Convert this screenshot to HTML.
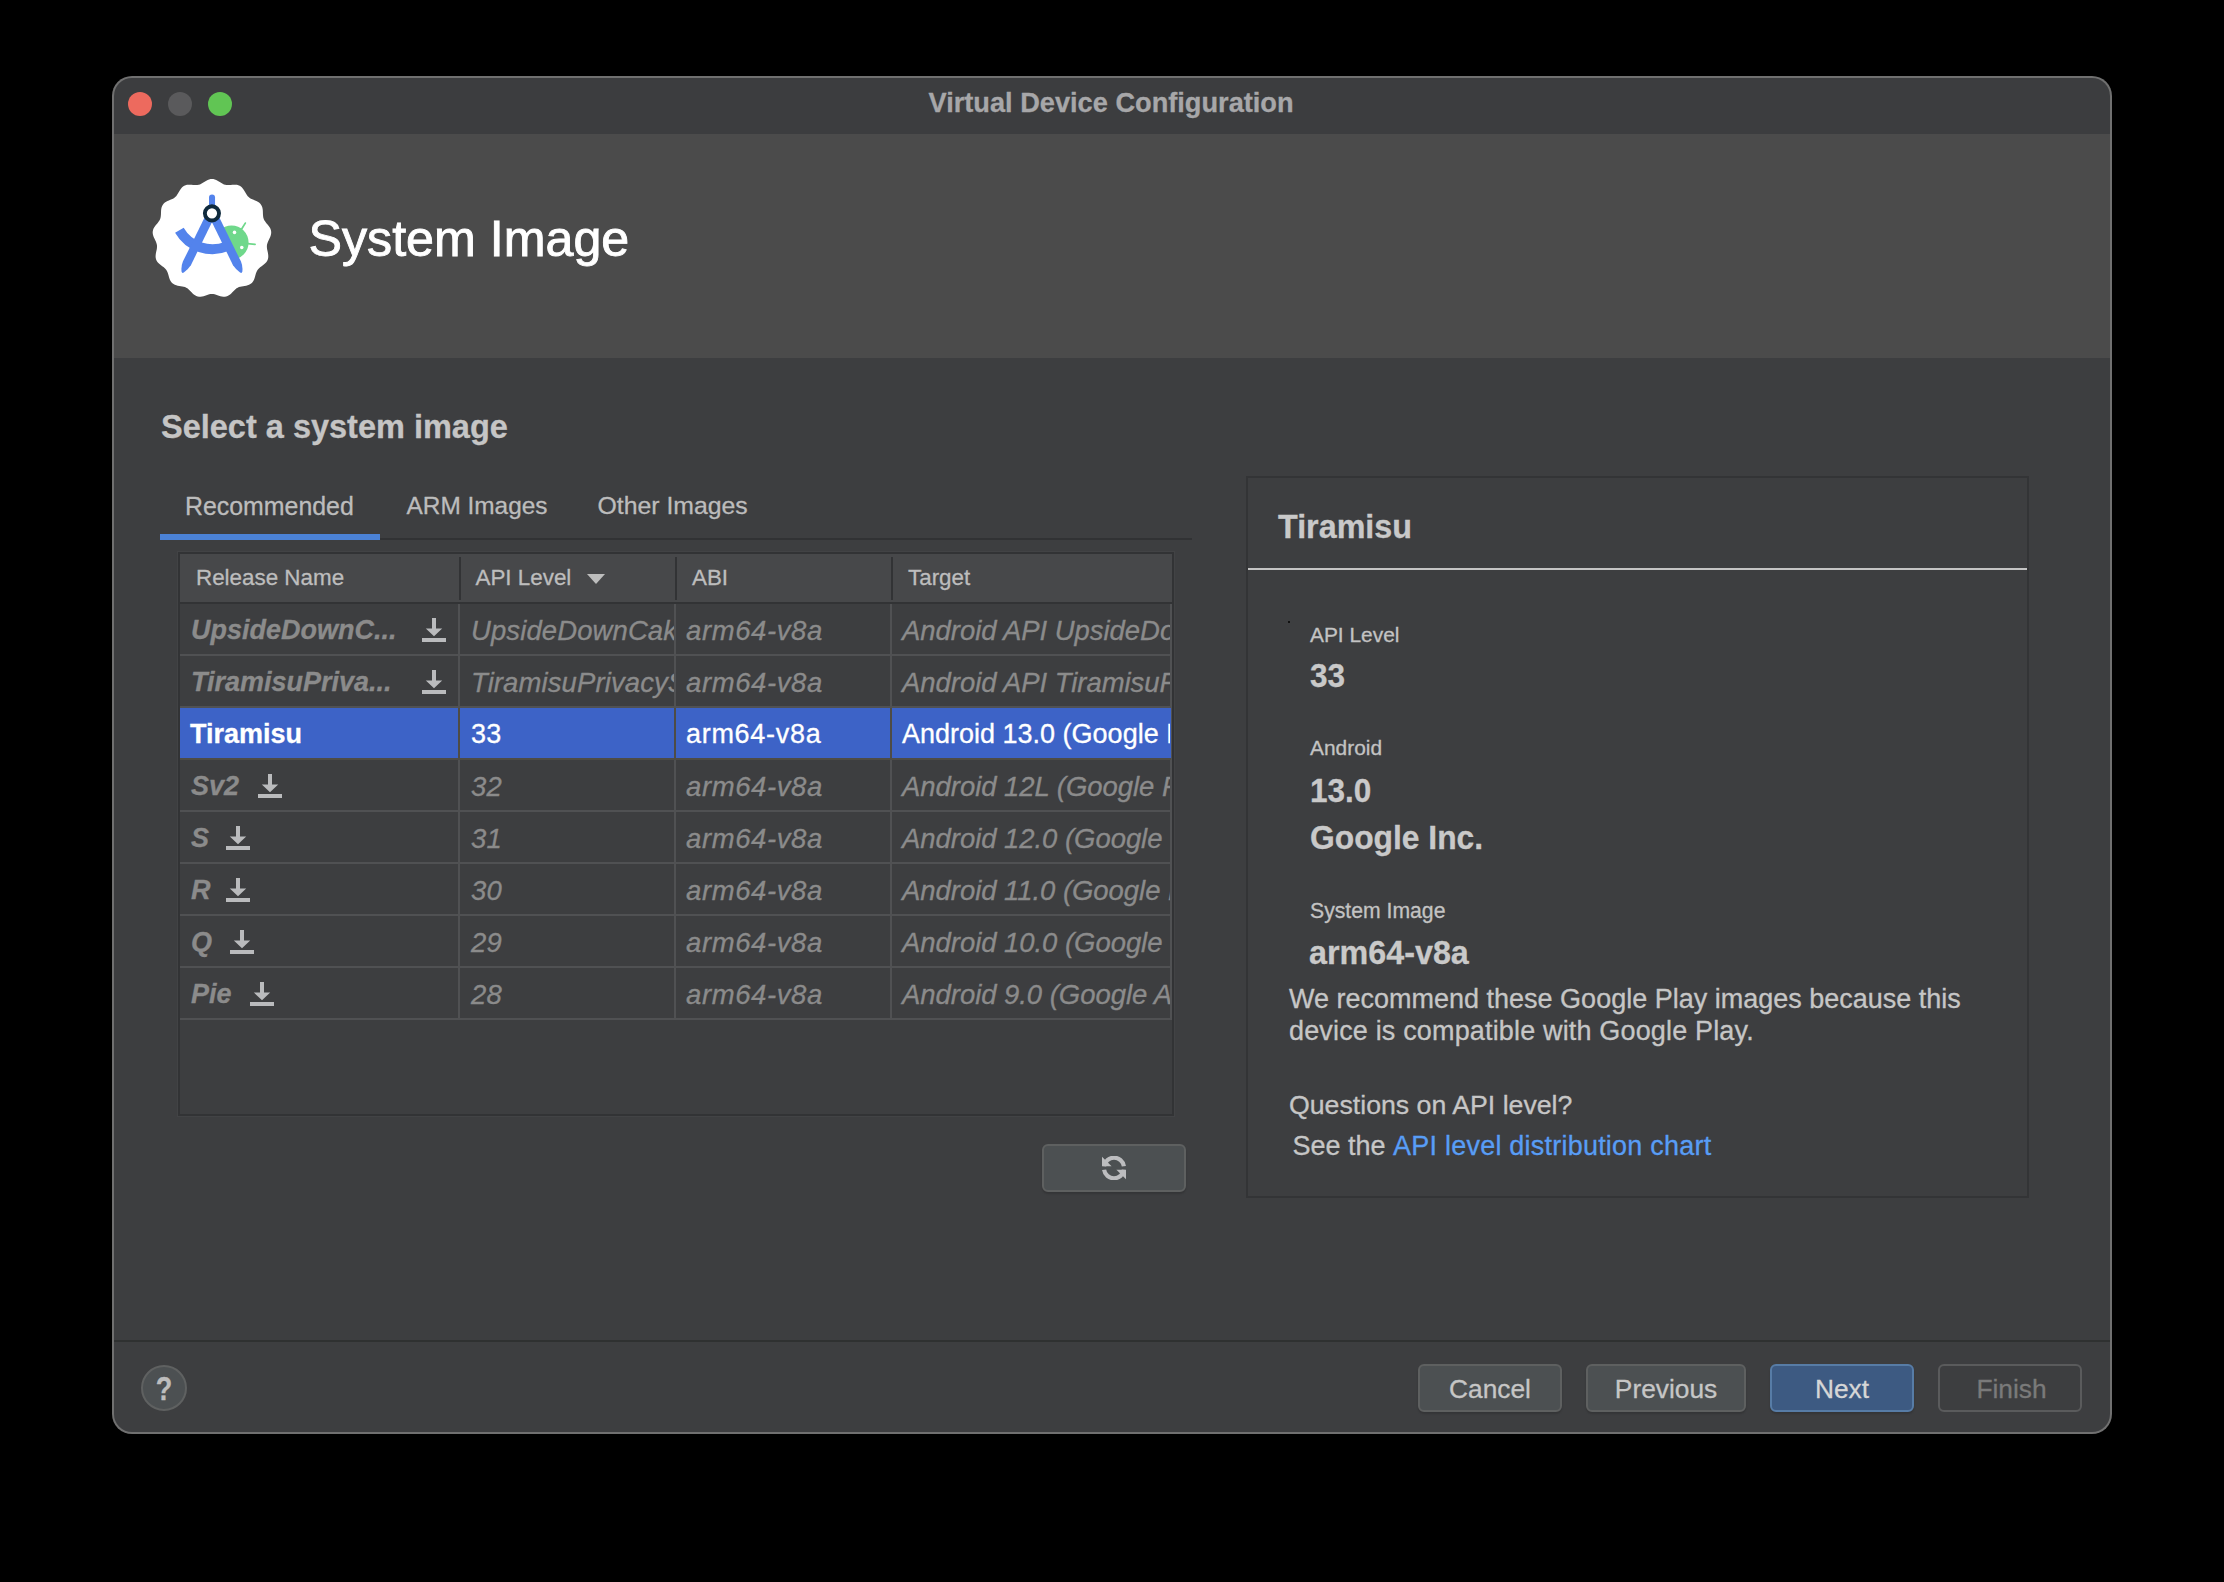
<!DOCTYPE html>
<html><head><meta charset="utf-8"><style>
html,body{margin:0;padding:0;}
body{width:2224px;height:1582px;background:#000;position:relative;overflow:hidden;font-family:"Liberation Sans",sans-serif;}
.t{position:absolute;white-space:pre;-webkit-text-stroke-width:0.3px;}
.r{position:absolute;}
.clip{position:absolute;overflow:hidden;}
.win{position:absolute;left:112px;top:76px;width:2000px;height:1358px;border-radius:20px;background:#707070;}
</style></head><body>
<div class="win"></div>
<div class="r" style="left:114px;top:78px;width:1996px;height:56px;background:#3c3d3f;border-radius:18px 18px 0 0"></div>
<div class="r" style="left:114px;top:134px;width:1996px;height:224px;background:#4b4b4b;"></div>
<div class="r" style="left:114px;top:358px;width:1996px;height:1074px;background:#3d3e40;border-radius:0 0 18px 18px"></div>
<div class="r" style="left:128px;top:92px;width:24px;height:24px;background:#ed6a5e;border-radius:50%"></div>
<div class="r" style="left:168px;top:92px;width:24px;height:24px;background:#5a5a5c;border-radius:50%"></div>
<div class="r" style="left:208px;top:92px;width:24px;height:24px;background:#61c554;border-radius:50%"></div>
<div class="t" style="left:928.5px;top:88.6px;font-size:27.2px;line-height:27.2px;color:#a7a7a9;font-weight:bold;font-style:normal;">Virtual Device Configuration</div>
<svg class="r" style="left:140px;top:170px" width="150" height="140" viewBox="0 0 1695 1582">
<defs><clipPath id="hc"><path d="M870 560 L1185 1200 L1600 1200 L1600 400 Z"/></clipPath></defs>
<path d="M813.0 101.0 L829.3 102.4 L845.3 106.4 L861.1 112.6 L876.4 120.7 L891.3 129.7 L905.8 139.2 L920.1 148.2 L934.2 156.2 L948.3 162.6 L962.8 167.2 L977.8 169.9 L993.3 170.7 L1009.5 170.2 L1026.3 168.8 L1043.5 167.2 L1060.9 166.1 L1078.2 166.2 L1095.1 167.9 L1111.2 171.9 L1126.2 178.2 L1140.0 187.0 L1152.4 198.0 L1163.4 210.9 L1173.3 225.1 L1182.2 240.1 L1190.7 255.1 L1199.1 269.7 L1207.9 283.4 L1217.4 295.6 L1228.1 306.4 L1240.1 315.7 L1253.5 323.8 L1268.0 330.8 L1283.5 337.4 L1299.5 344.0 L1315.5 351.1 L1330.8 359.1 L1344.9 368.6 L1357.3 379.5 L1367.7 392.1 L1375.8 406.3 L1381.6 421.8 L1385.4 438.3 L1387.6 455.5 L1388.5 472.9 L1389.0 490.2 L1389.7 507.0 L1391.1 523.2 L1393.9 538.5 L1398.3 553.0 L1404.6 566.8 L1412.7 580.1 L1422.3 593.2 L1433.0 606.2 L1444.1 619.4 L1454.9 633.1 L1464.7 647.4 L1472.9 662.3 L1478.8 677.8 L1482.1 693.8 L1482.7 710.1 L1480.7 726.5 L1476.3 742.9 L1470.2 759.1 L1463.0 775.0 L1455.4 790.5 L1448.2 805.7 L1441.9 820.7 L1437.2 835.5 L1434.4 850.5 L1433.6 865.6 L1434.6 881.2 L1437.0 897.2 L1440.4 913.7 L1444.1 930.6 L1447.3 947.7 L1449.4 964.9 L1449.7 981.9 L1447.7 998.3 L1443.2 1014.0 L1436.2 1028.7 L1426.7 1042.3 L1415.3 1054.9 L1402.3 1066.4 L1388.5 1077.1 L1374.6 1087.3 L1361.1 1097.4 L1348.7 1107.7 L1337.6 1118.7 L1328.2 1130.6 L1320.4 1143.6 L1314.0 1157.9 L1308.8 1173.2 L1304.1 1189.4 L1299.5 1206.0 L1294.4 1222.7 L1288.2 1238.9 L1280.6 1254.0 L1271.2 1267.7 L1259.9 1279.5 L1246.9 1289.3 L1232.2 1296.9 L1216.2 1302.7 L1199.4 1306.9 L1182.2 1309.9 L1165.1 1312.5 L1148.5 1315.2 L1132.7 1318.5 L1117.8 1323.1 L1103.9 1329.3 L1091.0 1337.2 L1078.7 1346.9 L1067.0 1358.0 L1055.3 1370.1 L1043.5 1382.8 L1031.2 1395.1 L1018.2 1406.6 L1004.4 1416.5 L989.8 1424.2 L974.3 1429.4 L958.2 1432.0 L941.6 1431.9 L924.8 1429.6 L908.0 1425.5 L891.3 1420.3 L875.0 1414.6 L859.1 1409.2 L843.5 1404.8 L828.2 1402.0 L813.0 1401.0 L797.8 1402.0 L782.5 1404.8 L766.9 1409.2 L751.0 1414.6 L734.7 1420.3 L718.0 1425.5 L701.2 1429.6 L684.4 1431.9 L667.8 1432.0 L651.7 1429.4 L636.2 1424.2 L621.6 1416.5 L607.8 1406.6 L594.8 1395.1 L582.5 1382.8 L570.7 1370.1 L559.0 1358.0 L547.3 1346.9 L535.0 1337.2 L522.1 1329.3 L508.2 1323.1 L493.3 1318.5 L477.5 1315.2 L460.9 1312.5 L443.8 1309.9 L426.6 1306.9 L409.8 1302.7 L393.8 1296.9 L379.1 1289.3 L366.1 1279.5 L354.8 1267.7 L345.4 1254.0 L337.8 1238.9 L331.6 1222.7 L326.5 1206.0 L321.9 1189.4 L317.2 1173.2 L312.0 1157.9 L305.6 1143.6 L297.8 1130.6 L288.4 1118.7 L277.3 1107.7 L264.9 1097.4 L251.4 1087.3 L237.5 1077.1 L223.7 1066.4 L210.7 1054.9 L199.3 1042.3 L189.8 1028.7 L182.8 1014.0 L178.3 998.3 L176.3 981.9 L176.6 964.9 L178.7 947.7 L181.9 930.6 L185.6 913.7 L189.0 897.2 L191.4 881.2 L192.4 865.6 L191.6 850.5 L188.8 835.5 L184.1 820.7 L177.8 805.7 L170.6 790.5 L163.0 775.0 L155.8 759.1 L149.7 742.9 L145.3 726.5 L143.3 710.1 L143.9 693.8 L147.2 677.8 L153.1 662.3 L161.3 647.4 L171.1 633.1 L181.9 619.4 L193.0 606.2 L203.7 593.2 L213.3 580.1 L221.4 566.8 L227.7 553.0 L232.1 538.5 L234.9 523.2 L236.3 507.0 L237.0 490.2 L237.5 472.9 L238.4 455.5 L240.6 438.3 L244.4 421.8 L250.2 406.3 L258.3 392.1 L268.7 379.5 L281.1 368.6 L295.2 359.1 L310.5 351.1 L326.5 344.0 L342.5 337.4 L358.0 330.8 L372.5 323.8 L385.9 315.7 L397.9 306.4 L408.6 295.6 L418.1 283.4 L426.9 269.7 L435.3 255.1 L443.8 240.1 L452.7 225.1 L462.6 210.9 L473.6 198.0 L486.0 187.0 L499.8 178.2 L514.8 171.9 L530.9 167.9 L547.8 166.2 L565.1 166.1 L582.5 167.2 L599.7 168.8 L616.5 170.2 L632.7 170.7 L648.2 169.9 L663.2 167.2 L677.7 162.6 L691.8 156.2 L705.9 148.2 L720.2 139.2 L734.7 129.7 L749.6 120.7 L764.9 112.6 L780.7 106.4 L796.7 102.4 L813.0 101.0Z" fill="#ffffff"/>
<g clip-path="url(#hc)">
<circle cx="1035" cy="820" r="192" fill="#6fd88b"/>
</g>
<path d="M1140 680 L1190 600" stroke="#6fd88b" stroke-width="20" stroke-linecap="round"/>
<path d="M1215 832 L1300 840" stroke="#6fd88b" stroke-width="20" stroke-linecap="round"/>
<circle cx="1068" cy="705" r="20" fill="#fff"/>
<circle cx="1150" cy="875" r="20" fill="#fff"/>
<path d="M780 400 L780 310 A34 34 0 0 1 848 310 L848 400 Z" fill="#5383ec"/>
<path d="M445 680 A431 431 0 0 0 985 862" fill="none" stroke="#5383ec" stroke-width="112"/>
<path d="M735 525 L485 1035 Q462 1090 470 1150 Q475 1170 495 1158 Q545 1120 575 1075 L820 575 Z" fill="#5383ec"/>
<path d="M891 525 L1141 1035 Q1164 1090 1156 1150 Q1151 1170 1131 1158 Q1081 1120 1051 1075 L806 575 Z" fill="#5383ec"/>
<circle cx="813" cy="490" r="80" fill="#fff" stroke="#0f2a3d" stroke-width="44"/>
</svg>
<div class="t" style="left:308.5px;top:213.8px;font-size:50.2px;line-height:50.2px;color:#ffffff;font-weight:normal;font-style:normal;-webkit-text-stroke-width:0.9px">System Image</div>
<div class="t" style="left:161.0px;top:410.9px;font-size:32.5px;line-height:32.5px;color:#c5c5c5;font-weight:bold;font-style:normal;">Select a system image</div>
<div class="t" style="left:185.0px;top:493.6px;font-size:24.9px;line-height:24.9px;color:#bcbcbc;font-weight:normal;font-style:normal;">Recommended</div>
<div class="t" style="left:406.5px;top:494.0px;font-size:24.4px;line-height:24.4px;color:#bcbcbc;font-weight:normal;font-style:normal;">ARM Images</div>
<div class="t" style="left:597.5px;top:493.7px;font-size:24.8px;line-height:24.8px;color:#bcbcbc;font-weight:normal;font-style:normal;">Other Images</div>
<div class="r" style="left:160px;top:538px;width:1032px;height:2px;background:#313234;"></div>
<div class="r" style="left:160px;top:534px;width:220px;height:6px;background:#4b82d6;"></div>
<div class="r" style="left:178px;top:552px;width:996px;height:564px;background:#3d3e40;box-sizing:border-box;border:2px solid #323335;box-shadow:0 0 0 1px #424345"></div>
<div class="r" style="left:180px;top:554px;width:992px;height:48px;background:#47484a;"></div>
<div class="r" style="left:180px;top:602px;width:992px;height:2px;background:#323335;"></div>
<div class="r" style="left:459px;top:557px;width:2px;height:43px;background:#323335;"></div>
<div class="r" style="left:675px;top:557px;width:2px;height:43px;background:#323335;"></div>
<div class="r" style="left:891px;top:557px;width:2px;height:43px;background:#323335;"></div>
<div class="t" style="left:196.0px;top:567.1px;font-size:22.4px;line-height:22.4px;color:#bdbdbd;font-weight:normal;font-style:normal;">Release Name</div>
<div class="t" style="left:475.5px;top:567.1px;font-size:22.4px;line-height:22.4px;color:#bdbdbd;font-weight:normal;font-style:normal;">API Level</div>
<svg class="r" style="left:586px;top:573px" width="20" height="12"><path d="M1 1 L19 1 L10 11 Z" fill="#bdbdbd"/></svg>
<div class="t" style="left:692.0px;top:567.1px;font-size:22.4px;line-height:22.4px;color:#bdbdbd;font-weight:normal;font-style:normal;">ABI</div>
<div class="t" style="left:908.0px;top:567.1px;font-size:22.4px;line-height:22.4px;color:#bdbdbd;font-weight:normal;font-style:normal;">Target</div>
<div class="r" style="left:458px;top:604px;width:2px;height:416px;background:#505153;"></div>
<div class="r" style="left:674px;top:604px;width:2px;height:416px;background:#505153;"></div>
<div class="r" style="left:890px;top:604px;width:2px;height:416px;background:#505153;"></div>
<div class="r" style="left:1170px;top:604px;width:2px;height:416px;background:#505153;"></div>
<div class="r" style="left:180px;top:654px;width:991px;height:2px;background:#505153;"></div>
<div class="t" style="left:191.0px;top:617.4px;font-size:27px;line-height:27px;color:#8b8b8b;font-weight:bold;font-style:italic;">UpsideDownC...</div>
<svg class="r" style="left:422px;top:618px" width="24" height="24"><path d="M10 0h4v10.5h6.2L12 18.3 3.8 10.5H10z M0 20h24v4H0z" fill="#babbbd"/></svg>
<div class="clip" style="left:460px;top:604px;width:214px;height:50px"><div class="t" style="left:11.0px;top:13.0px;font-size:27.5px;line-height:27.5px;color:#8b8b8b;font-weight:normal;font-style:italic;letter-spacing:0.1px">UpsideDownCake</div>
</div>
<div class="clip" style="left:676px;top:604px;width:214px;height:50px"><div class="t" style="left:10.0px;top:13.0px;font-size:27.5px;line-height:27.5px;color:#8b8b8b;font-weight:normal;font-style:italic;letter-spacing:0.6px">arm64-v8a</div>
</div>
<div class="clip" style="left:892px;top:604px;width:278px;height:50px"><div class="t" style="left:10.0px;top:13.0px;font-size:27.5px;line-height:27.5px;color:#8b8b8b;font-weight:normal;font-style:italic;letter-spacing:-0.05px">Android API UpsideDownCake</div>
</div>
<div class="r" style="left:180px;top:706px;width:991px;height:2px;background:#505153;"></div>
<div class="t" style="left:191.0px;top:669.4px;font-size:27px;line-height:27px;color:#8b8b8b;font-weight:bold;font-style:italic;">TiramisuPriva...</div>
<svg class="r" style="left:422px;top:670px" width="24" height="24"><path d="M10 0h4v10.5h6.2L12 18.3 3.8 10.5H10z M0 20h24v4H0z" fill="#babbbd"/></svg>
<div class="clip" style="left:460px;top:656px;width:214px;height:50px"><div class="t" style="left:11.0px;top:13.0px;font-size:27.5px;line-height:27.5px;color:#8b8b8b;font-weight:normal;font-style:italic;letter-spacing:0.1px">TiramisuPrivacySandbox</div>
</div>
<div class="clip" style="left:676px;top:656px;width:214px;height:50px"><div class="t" style="left:10.0px;top:13.0px;font-size:27.5px;line-height:27.5px;color:#8b8b8b;font-weight:normal;font-style:italic;letter-spacing:0.6px">arm64-v8a</div>
</div>
<div class="clip" style="left:892px;top:656px;width:278px;height:50px"><div class="t" style="left:10.0px;top:13.0px;font-size:27.5px;line-height:27.5px;color:#8b8b8b;font-weight:normal;font-style:italic;letter-spacing:-0.05px">Android API TiramisuPrivacySandbox</div>
</div>
<div class="r" style="left:180px;top:708px;width:991px;height:50px;background:#3d63c7;"></div>
<div class="r" style="left:458px;top:708px;width:2px;height:52px;background:#4e4c46;"></div>
<div class="r" style="left:674px;top:708px;width:2px;height:52px;background:#4e4c46;"></div>
<div class="r" style="left:890px;top:708px;width:2px;height:52px;background:#4e4c46;"></div>
<div class="r" style="left:180px;top:758px;width:991px;height:2px;background:#4e4c46;"></div>
<div class="t" style="left:190.0px;top:721.4px;font-size:27px;line-height:27px;color:#ffffff;font-weight:bold;font-style:normal;">Tiramisu</div>
<div class="clip" style="left:460px;top:708px;width:214px;height:50px"><div class="t" style="left:11.0px;top:13.4px;font-size:27px;line-height:27px;color:#ffffff;font-weight:normal;font-style:normal;letter-spacing:0.3px">33</div>
</div>
<div class="clip" style="left:676px;top:708px;width:214px;height:50px"><div class="t" style="left:10.0px;top:13.4px;font-size:27px;line-height:27px;color:#ffffff;font-weight:normal;font-style:normal;letter-spacing:0.7px">arm64-v8a</div>
</div>
<div class="clip" style="left:892px;top:708px;width:278px;height:50px"><div class="t" style="left:10.0px;top:13.4px;font-size:27px;line-height:27px;color:#ffffff;font-weight:normal;font-style:normal;letter-spacing:0px">Android 13.0 (Google Play)</div>
</div>
<div class="r" style="left:180px;top:810px;width:991px;height:2px;background:#505153;"></div>
<div class="t" style="left:191.0px;top:773.4px;font-size:27px;line-height:27px;color:#8b8b8b;font-weight:bold;font-style:italic;">Sv2</div>
<svg class="r" style="left:258px;top:774px" width="24" height="24"><path d="M10 0h4v10.5h6.2L12 18.3 3.8 10.5H10z M0 20h24v4H0z" fill="#babbbd"/></svg>
<div class="clip" style="left:460px;top:760px;width:214px;height:50px"><div class="t" style="left:11.0px;top:13.0px;font-size:27.5px;line-height:27.5px;color:#8b8b8b;font-weight:normal;font-style:italic;letter-spacing:0.1px">32</div>
</div>
<div class="clip" style="left:676px;top:760px;width:214px;height:50px"><div class="t" style="left:10.0px;top:13.0px;font-size:27.5px;line-height:27.5px;color:#8b8b8b;font-weight:normal;font-style:italic;letter-spacing:0.6px">arm64-v8a</div>
</div>
<div class="clip" style="left:892px;top:760px;width:278px;height:50px"><div class="t" style="left:10.0px;top:13.0px;font-size:27.5px;line-height:27.5px;color:#8b8b8b;font-weight:normal;font-style:italic;letter-spacing:-0.05px">Android 12L (Google Play)</div>
</div>
<div class="r" style="left:180px;top:862px;width:991px;height:2px;background:#505153;"></div>
<div class="t" style="left:191.0px;top:825.4px;font-size:27px;line-height:27px;color:#8b8b8b;font-weight:bold;font-style:italic;">S</div>
<svg class="r" style="left:226px;top:826px" width="24" height="24"><path d="M10 0h4v10.5h6.2L12 18.3 3.8 10.5H10z M0 20h24v4H0z" fill="#babbbd"/></svg>
<div class="clip" style="left:460px;top:812px;width:214px;height:50px"><div class="t" style="left:11.0px;top:13.0px;font-size:27.5px;line-height:27.5px;color:#8b8b8b;font-weight:normal;font-style:italic;letter-spacing:0.1px">31</div>
</div>
<div class="clip" style="left:676px;top:812px;width:214px;height:50px"><div class="t" style="left:10.0px;top:13.0px;font-size:27.5px;line-height:27.5px;color:#8b8b8b;font-weight:normal;font-style:italic;letter-spacing:0.6px">arm64-v8a</div>
</div>
<div class="clip" style="left:892px;top:812px;width:278px;height:50px"><div class="t" style="left:10.0px;top:13.0px;font-size:27.5px;line-height:27.5px;color:#8b8b8b;font-weight:normal;font-style:italic;letter-spacing:-0.05px">Android 12.0 (Google Play)</div>
</div>
<div class="r" style="left:180px;top:914px;width:991px;height:2px;background:#505153;"></div>
<div class="t" style="left:191.0px;top:877.4px;font-size:27px;line-height:27px;color:#8b8b8b;font-weight:bold;font-style:italic;">R</div>
<svg class="r" style="left:226px;top:878px" width="24" height="24"><path d="M10 0h4v10.5h6.2L12 18.3 3.8 10.5H10z M0 20h24v4H0z" fill="#babbbd"/></svg>
<div class="clip" style="left:460px;top:864px;width:214px;height:50px"><div class="t" style="left:11.0px;top:13.0px;font-size:27.5px;line-height:27.5px;color:#8b8b8b;font-weight:normal;font-style:italic;letter-spacing:0.1px">30</div>
</div>
<div class="clip" style="left:676px;top:864px;width:214px;height:50px"><div class="t" style="left:10.0px;top:13.0px;font-size:27.5px;line-height:27.5px;color:#8b8b8b;font-weight:normal;font-style:italic;letter-spacing:0.6px">arm64-v8a</div>
</div>
<div class="clip" style="left:892px;top:864px;width:278px;height:50px"><div class="t" style="left:10.0px;top:13.0px;font-size:27.5px;line-height:27.5px;color:#8b8b8b;font-weight:normal;font-style:italic;letter-spacing:-0.05px">Android 11.0 (Google Play)</div>
</div>
<div class="r" style="left:180px;top:966px;width:991px;height:2px;background:#505153;"></div>
<div class="t" style="left:191.0px;top:929.4px;font-size:27px;line-height:27px;color:#8b8b8b;font-weight:bold;font-style:italic;">Q</div>
<svg class="r" style="left:230px;top:930px" width="24" height="24"><path d="M10 0h4v10.5h6.2L12 18.3 3.8 10.5H10z M0 20h24v4H0z" fill="#babbbd"/></svg>
<div class="clip" style="left:460px;top:916px;width:214px;height:50px"><div class="t" style="left:11.0px;top:13.0px;font-size:27.5px;line-height:27.5px;color:#8b8b8b;font-weight:normal;font-style:italic;letter-spacing:0.1px">29</div>
</div>
<div class="clip" style="left:676px;top:916px;width:214px;height:50px"><div class="t" style="left:10.0px;top:13.0px;font-size:27.5px;line-height:27.5px;color:#8b8b8b;font-weight:normal;font-style:italic;letter-spacing:0.6px">arm64-v8a</div>
</div>
<div class="clip" style="left:892px;top:916px;width:278px;height:50px"><div class="t" style="left:10.0px;top:13.0px;font-size:27.5px;line-height:27.5px;color:#8b8b8b;font-weight:normal;font-style:italic;letter-spacing:-0.05px">Android 10.0 (Google Play)</div>
</div>
<div class="r" style="left:180px;top:1018px;width:991px;height:2px;background:#505153;"></div>
<div class="t" style="left:191.0px;top:981.4px;font-size:27px;line-height:27px;color:#8b8b8b;font-weight:bold;font-style:italic;">Pie</div>
<svg class="r" style="left:250px;top:982px" width="24" height="24"><path d="M10 0h4v10.5h6.2L12 18.3 3.8 10.5H10z M0 20h24v4H0z" fill="#babbbd"/></svg>
<div class="clip" style="left:460px;top:968px;width:214px;height:50px"><div class="t" style="left:11.0px;top:13.0px;font-size:27.5px;line-height:27.5px;color:#8b8b8b;font-weight:normal;font-style:italic;letter-spacing:0.1px">28</div>
</div>
<div class="clip" style="left:676px;top:968px;width:214px;height:50px"><div class="t" style="left:10.0px;top:13.0px;font-size:27.5px;line-height:27.5px;color:#8b8b8b;font-weight:normal;font-style:italic;letter-spacing:0.6px">arm64-v8a</div>
</div>
<div class="clip" style="left:892px;top:968px;width:278px;height:50px"><div class="t" style="left:10.0px;top:13.0px;font-size:27.5px;line-height:27.5px;color:#8b8b8b;font-weight:normal;font-style:italic;letter-spacing:-0.05px">Android 9.0 (Google APIs)</div>
</div>
<div class="r" style="left:1042px;top:1144px;width:144px;height:48px;background:#4c5052;box-sizing:border-box;border:2px solid #5e6060;border-radius:6px;box-shadow:0 2px 2px rgba(0,0,0,0.15)"></div>
<svg class="r" style="left:1102px;top:1156px" width="24" height="24" viewBox="0 0 24 24">
<path d="M2.1 10.3 A10 10 0 0 1 21.9 10.3" fill="none" stroke="#bcbdbf" stroke-width="4.2"/>
<path d="M21.9 13.7 A10 10 0 0 1 2.1 13.7" fill="none" stroke="#bcbdbf" stroke-width="4.2"/>
<path d="M0 0.8 L0 10.3 L9.6 10.3 Z" fill="#bcbdbf"/>
<path d="M24 13.7 L24 23.3 L14.4 13.7 Z" fill="#bcbdbf"/>
</svg>
<div class="r" style="left:1246px;top:476px;width:783px;height:722px;background:transparent;box-sizing:border-box;border:2px solid #333436"></div>
<div class="t" style="left:1278.0px;top:510.9px;font-size:32.3px;line-height:32.3px;color:#c9c9c9;font-weight:bold;font-style:normal;">Tiramisu</div>
<div class="r" style="left:1248px;top:568px;width:779px;height:2px;background:#c4c4c4;"></div>
<div class="r" style="left:1288px;top:621px;width:2px;height:2px;background:#111;"></div>
<div class="t" style="left:1310.0px;top:624.8px;font-size:20.9px;line-height:20.9px;color:#c3c3c3;font-weight:normal;font-style:normal;">API Level</div>
<div class="t" style="left:1310.0px;top:661.2px;font-size:31.5px;line-height:31.5px;color:#c9c9c9;font-weight:bold;font-style:normal;transform:scaleY(1.06);transform-origin:0 84.65%">33</div>
<div class="t" style="left:1310.0px;top:738.4px;font-size:20.9px;line-height:20.9px;color:#c3c3c3;font-weight:normal;font-style:normal;">Android</div>
<div class="t" style="left:1310.0px;top:775.5px;font-size:31.5px;line-height:31.5px;color:#c9c9c9;font-weight:bold;font-style:normal;transform:scaleY(1.08);transform-origin:0 84.65%">13.0</div>
<div class="t" style="left:1310.0px;top:823.2px;font-size:31.8px;line-height:31.8px;color:#c9c9c9;font-weight:bold;font-style:normal;transform:scaleY(1.04);transform-origin:0 84.65%">Google Inc.</div>
<div class="t" style="left:1310.0px;top:900.1px;font-size:21.2px;line-height:21.2px;color:#c3c3c3;font-weight:normal;font-style:normal;">System Image</div>
<div class="t" style="left:1309.0px;top:936.7px;font-size:32.3px;line-height:32.3px;color:#c9c9c9;font-weight:bold;font-style:normal;">arm64-v8a</div>
<div class="t" style="left:1289.0px;top:986.1px;font-size:27px;line-height:27px;color:#c6c6c6;font-weight:normal;font-style:normal;">We recommend these Google Play images because this</div>
<div class="t" style="left:1289.0px;top:1018.1px;font-size:27px;line-height:27px;color:#c6c6c6;font-weight:normal;font-style:normal;letter-spacing:0.16px">device is compatible with Google Play.</div>
<div class="t" style="left:1289.0px;top:1091.9px;font-size:26.7px;line-height:26.7px;color:#c6c6c6;font-weight:normal;font-style:normal;">Questions on API level?</div>
<div class="t" style="left:1292.5px;top:1133.3px;font-size:27px;line-height:27px;color:#c6c6c6;font-weight:normal;font-style:normal;">See the <span style="color:#589df6;letter-spacing:0.22px">API level distribution chart</span></div>
<div class="r" style="left:114px;top:1340px;width:1996px;height:2px;background:#2f3131;"></div>
<div class="r" style="left:141px;top:1365px;width:46px;height:46px;background:#4c5052;box-sizing:border-box;border:2px solid #5f6161;border-radius:50%"></div>
<div class="t" style="left:141px;top:1372.1px;width:46px;text-align:center;font-size:33px;line-height:33px;color:#bdbdbd;font-weight:bold;transform:scaleX(0.82)">?</div>
<div class="r" style="left:1418px;top:1364px;width:144px;height:48px;background:;box-sizing:border-box;border-radius:6px;background:#4c5052;border:2px solid #5e6060;box-shadow:0 2px 2px rgba(0,0,0,0.15)"></div>
<div class="t" style="left:1418px;top:1376.3px;width:144px;text-align:center;font-size:26.3px;line-height:26.3px;color:#c6c6c6">Cancel</div>
<div class="r" style="left:1586px;top:1364px;width:160px;height:48px;background:;box-sizing:border-box;border-radius:6px;background:#4c5052;border:2px solid #5e6060;box-shadow:0 2px 2px rgba(0,0,0,0.15)"></div>
<div class="t" style="left:1586px;top:1376.3px;width:160px;text-align:center;font-size:26.3px;line-height:26.3px;color:#c6c6c6">Previous</div>
<div class="r" style="left:1770px;top:1364px;width:144px;height:48px;background:;box-sizing:border-box;border-radius:6px;background:#3d5a82;border:2px solid #577ca6;box-shadow:0 2px 2px rgba(0,0,0,0.15)"></div>
<div class="t" style="left:1770px;top:1376.3px;width:144px;text-align:center;font-size:26.3px;line-height:26.3px;color:#d6d6d6">Next</div>
<div class="r" style="left:1938px;top:1364px;width:144px;height:48px;background:;box-sizing:border-box;border-radius:6px;background:transparent;border:2px solid #5a5b5c"></div>
<div class="t" style="left:1939.5px;top:1376.3px;width:144px;text-align:center;font-size:26.3px;line-height:26.3px;color:#7a7a7a">Finish</div>
</body></html>
